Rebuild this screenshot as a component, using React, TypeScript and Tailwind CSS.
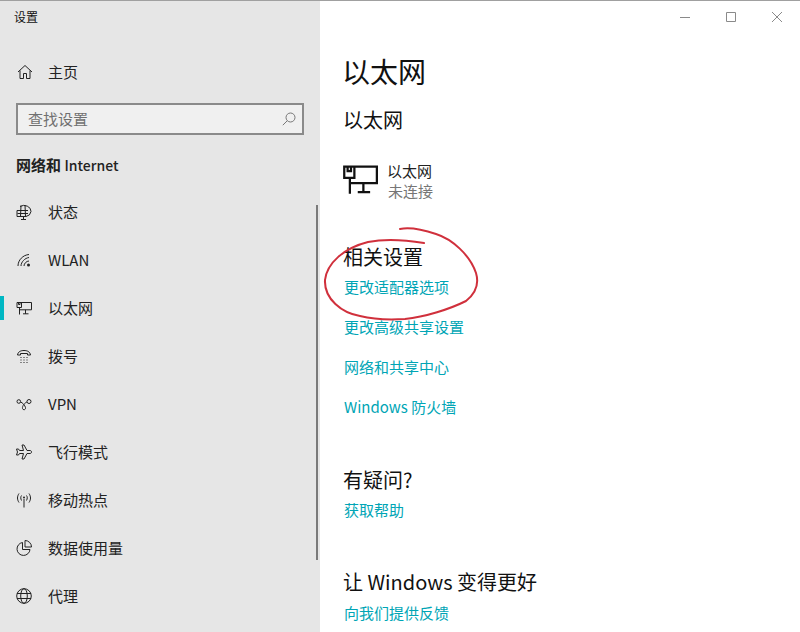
const FONT = "font-['Noto_Sans_CJK_SC','Open_Sans',sans-serif]"

const iconClass = 'h-[16px] w-[16px] shrink-0 text-[#222]'

function HomeIcon() {
	return (
		<svg className={iconClass} viewBox="0 0 16 16" fill="none" stroke="currentColor" strokeWidth="1">
			<path d="M1 8 8 1.500 15 8M3 6.500V14.500H6.500V9.500H9.500V14.500H13V6.500" />
		</svg>
	)
}

function StatusIcon() {
	return (
		<svg className={iconClass} viewBox="0 0 16 16" fill="none" stroke="currentColor" strokeWidth="1">
			<path d="M4 2.500A7 6 0 0 1 15 7.500 6 6 0 0 1 10 12.500H1V6.500H12M5 1.500 4.500 12.500M9 1 9.500 12.500M1.500 9.500H12M7.500 12.500V15M5 15.500H10" />
		</svg>
	)
}

function WifiIcon() {
	return (
		<svg className={iconClass} viewBox="0 0 16 16" fill="none" stroke="currentColor" strokeWidth="1">
			<path d="M2 14C2 8 7 3 13 2.500M5 14C5 10 9 6 13 5.500M8 14C8 11.500 10.500 9 13 9" />
			<circle cx="12.500" cy="13" r="1.500" fill="currentColor" stroke="none" />
		</svg>
	)
}

function EthernetIcon({ className }: { className: string }) {
	return (
		<svg className={className} viewBox="0 0 16 16" fill="none" stroke="currentColor" strokeWidth="1">
			<path d="M5 2.500H15.500V9.800H3.500M1 2.500H5.500V7.500H1ZM2.500 2.500V4.500H4V2.500M3.500 7.500V14.500M7 13.800H12.500M9.500 9.800V13.800" />
		</svg>
	)
}

function DialIcon() {
	return (
		<svg className={iconClass} viewBox="0 0 16 16" fill="none" stroke="currentColor" strokeWidth="1">
			<path d="M1.500 7C2 3.500 5 2.500 8 2.500S14 3.500 14.500 7H11.500V5.500H4.500V7Z" />
			<path d="M4.500 9.500H5.500M7.500 9.500H8.500M10.500 9.500H11.500M4.500 12H5.500M7.500 12H8.500M10.500 12H11.500M4.500 14.500H5.500M7.500 14.500H8.500M10.500 14.500H11.500" />
		</svg>
	)
}

function VpnIcon() {
	return (
		<svg className={iconClass} viewBox="0 0 16 16" fill="none" stroke="currentColor" strokeWidth="1">
			<circle cx="2.800" cy="5.500" r="1.800" />
			<circle cx="13" cy="5.500" r="2" />
			<path d="M4.500 6C6.500 6.500 9 9.500 9.500 11.500 10 14 7 14.500 6.500 12.500 6 10 9 6.500 11 6" />
		</svg>
	)
}

function PlaneIcon() {
	return (
		<svg className={iconClass} viewBox="0 0 16 16" fill="none" stroke="currentColor" strokeWidth="1">
			<path d="M6 1H8L11 6.500H14C16 6.500 16 9.500 14 9.500H11L8 15H6L7.500 9.500H3.500L2.500 11H.5L1.500 8 .5 5H2.500L3.500 6.500H7.500Z" />
		</svg>
	)
}

function HotspotIcon() {
	return (
		<svg className={iconClass} viewBox="0 0 16 16" fill="none" stroke="currentColor" strokeWidth="1">
			<path d="M8 7V15.500M3 1.500C1 4.500 1 7.500 3 10.500M5.500 3.500C4.500 5 4.500 6.500 5.500 8.500M13 1.500C15 4.500 15 7.500 13 10.500M10.500 3.500C11.500 5 11.500 6.500 10.500 8.500" />
			<circle cx="8" cy="5.500" r="1" fill="currentColor" stroke="none" />
		</svg>
	)
}

function DataIcon() {
	return (
		<svg className={iconClass} viewBox="0 0 16 16" fill="none" stroke="currentColor" strokeWidth="1">
			<path d="M6.500 2.500A6.500 6.500 0 1 0 14 9.500H6.500ZM9 .5A6.500 6.500 0 0 1 15.500 7H9Z" />
		</svg>
	)
}

function GlobeIcon() {
	return (
		<svg className={iconClass} viewBox="0 0 16 16" fill="none" stroke="currentColor" strokeWidth="1">
			<circle cx="8" cy="8" r="7.300" />
			<ellipse cx="8" cy="8" rx="3.300" ry="7.300" />
			<path d="M1 5.500H15M1 10.500H15" />
		</svg>
	)
}

const NAV_ITEMS = [
	{ label: '状态', icon: <StatusIcon /> },
	{ label: 'WLAN', icon: <WifiIcon /> },
	{ label: '以太网', icon: <EthernetIcon className={iconClass} />, active: true },
	{ label: '拨号', icon: <DialIcon /> },
	{ label: 'VPN', icon: <VpnIcon /> },
	{ label: '飞行模式', icon: <PlaneIcon /> },
	{ label: '移动热点', icon: <HotspotIcon /> },
	{ label: '数据使用量', icon: <DataIcon /> },
	{ label: '代理', icon: <GlobeIcon /> },
]

function Sidebar() {
	return (
		<aside className="relative flex h-full w-[320px] shrink-0 flex-col bg-[#e6e6e6]">
			<div className="pl-[14px] pt-[7px] text-[12px] leading-[18px] text-[#111]">设置</div>

			<div className="mt-[32px] flex h-[28px] items-center pl-[17px] text-[15px] text-[#222]">
				<HomeIcon />
				<span className="ml-[15px]">主页</span>
			</div>

			<div className="mx-[16px] mt-[17px] flex h-[32px] items-center justify-between border-2 border-[#8a8a8a] bg-[#f0f0f0] pl-[10px] pr-[6px]">
				<span className="text-[15px] text-[#707070]">查找设置</span>
				<svg className="h-[14px] w-[14px] text-[#777]" viewBox="0 0 14 14" fill="none" stroke="currentColor" strokeWidth="1">
					<circle cx="8.500" cy="5.500" r="4.500" />
					<path d="M5.200 8.800 .8 13.200" />
				</svg>
			</div>

			<div className="mt-[20px] pl-[16px] text-[15px] font-bold leading-[20px] text-[#222]">
				网络和 <span className="text-[14px] font-medium">Internet</span>
			</div>

			<nav className="mt-[13px] flex flex-col">
				{NAV_ITEMS.map((item) => (
					<div key={item.label} className="relative flex h-[48px] items-center pl-[16px] text-[15px] text-[#222]">
						{item.active ? <div className="absolute left-0 top-[12px] h-[24px] w-[4px] bg-[#00b7c3]" /> : null}
						{item.icon}
						<span className="ml-[16px]">{item.label}</span>
					</div>
				))}
			</nav>

			<div className="absolute right-[2px] top-[204px] h-[355px] w-[2px] bg-[#7a7a7a]" />
		</aside>
	)
}

function LinkText({ children, className }: { children: string; className: string }) {
	return <div className={`ml-[1px] text-[15px] leading-[20px] text-[#00a5b5] ${className}`}>{children}</div>
}

function Content() {
	return (
		<main className="relative h-full flex-1 overflow-hidden bg-white pl-[23px]">
			<div className="absolute right-0 top-0 flex h-[32px] items-center text-[#8a8a8a]">
				<div className="flex w-[46px] justify-center">
					<svg className="h-[10px] w-[10px]" viewBox="0 0 10 10" stroke="currentColor"><path d="M0 5.500H10" /></svg>
				</div>
				<div className="flex w-[46px] justify-center">
					<svg className="h-[10px] w-[10px]" viewBox="0 0 10 10" fill="none" stroke="currentColor"><path d="M.5.5H9.500V9.500H.5Z" /></svg>
				</div>
				<div className="flex w-[46px] justify-center">
					<svg className="h-[10px] w-[10px]" viewBox="0 0 10 10" stroke="currentColor"><path d="M0 0 10 10M10 0 0 10" /></svg>
				</div>
			</div>

			<h1 className="-ml-[1px] pt-[48px] text-[28px] leading-[44px] text-[#111]">以太网</h1>
			<h2 className="mt-[11px] text-[20px] leading-[32px] text-[#111]">以太网</h2>

			<div className="mt-[25px] flex items-start">
				<EthernetIcon className="-ml-[1px] h-[36px] w-[36px] text-[#111]" />
				<div className="ml-[10px] text-[15px] leading-[20px]">
					<div className="-ml-[1px] text-[#222]">以太网</div>
					<div className="text-[#767676]">未连接</div>
				</div>
			</div>

			<h2 className="mt-[41px] text-[20px] leading-[30px] text-[#111]">相关设置</h2>
			<LinkText className="mt-[5px]">更改适配器选项</LinkText>
			<LinkText className="mt-[20px]">更改高级共享设置</LinkText>
			<LinkText className="mt-[20px]">网络和共享中心</LinkText>
			<LinkText className="mt-[20px]">Windows 防火墙</LinkText>

			<h2 className="mt-[48px] text-[20px] leading-[30px] text-[#111]">有疑问?</h2>
			<LinkText className="mt-[5px]">获取帮助</LinkText>

			<h2 className="mt-[47px] text-[20px] leading-[30px] text-[#111]">让 Windows 变得更好</h2>
			<LinkText className="mt-[6px]">向我们提供反馈</LinkText>
		</main>
	)
}

export default function App() {
	return (
		<div className={`relative flex h-[632px] w-[800px] overflow-hidden border-t border-t-[#a0a0a0] ${FONT}`}>
			<Sidebar />
			<Content />
			{/* hand-drawn annotation over the window */}
			<svg className="pointer-events-none absolute left-0 top-0 h-[632px] w-[800px]" viewBox="0 0 800 632" fill="none" stroke="#d0303c" strokeWidth="2" strokeLinecap="round">
				<path d="M424 242C405 239 384 238 368 241 344 247 327 262 325 279 324 298 342 312 360 315 372 318 390 319 405 318 425 316 450 308 466 300 476 292 479 282 476 272 470 254 452 238 436 233 424 229 410 226 400 228" />
			</svg>
		</div>
	)
}
